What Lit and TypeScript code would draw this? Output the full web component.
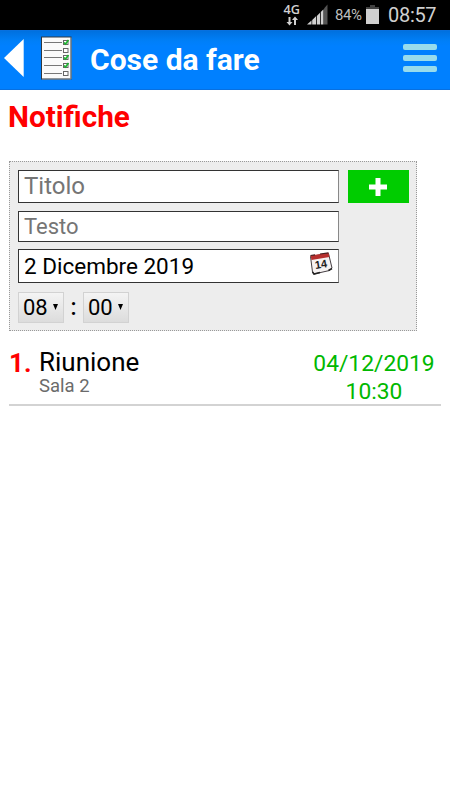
import { LitElement, html, css, svg } from "lit";
import { customElement, property } from "lit/decorators.js";

@customElement("status-bar")
class StatusBar extends LitElement {
  static styles = css`
    :host { display: flex; height: 30px; background: #000; color: #d0d0d0; font-family: Roboto, sans-serif; justify-content: flex-end; }
    .net { width: 20px; margin-right: 5px; height: 30px; }
    .signal { width: 21px; height: 30px; margin-right: 7px; }
    .pct { font-size: 15px; line-height: 31px; width: 27px; white-space: nowrap; color: #bdbdbd; letter-spacing: -0.4px; }
    .battery { width: 13px; height: 30px; margin: 0 9px 0 4px; }
    .time { font-size: 20px; line-height: 31px; width: 62px; white-space: nowrap; letter-spacing: -0.3px; }
    .g { font: 600 13px "Open Sans", sans-serif; fill: #d0d0d0; }
  `;
  render() {
    return html`
      <svg class="net" viewBox="0 0 20 30">
        <text class="g" x="1.500" y="13.500" textLength="16.500" lengthAdjust="spacingAndGlyphs">4G</text>
        <path d="M6.500 17h2v5h2l-3 3.500-3-3.500h2zM12 25v-5h-2l3-3.500 3 3.500h-2v5z" fill="#d0d0d0" />
      </svg>
      <svg class="signal" viewBox="0 0 21 30">
        <path d="M0 24.500 4.500 20.500v4zM5.200 24.500V20l3.800-3.800v8.300zM9.800 24.500V16l3.200-3.200v11.700zM13.800 24.500V12l2.700-2.700v15.200z" fill="#d0d0d0" />
        <path d="M17 24.500V8.500l3.500-4v20z" fill="#555" />
      </svg>
      <span class="pct">84%</span>
      <svg class="battery" viewBox="0 0 13 30">
        <path d="M4 5h5v2h4v3H0V7h4z" fill="#414141" /><path d="M0 9h13v15H0z" fill="#d0d0d0" />
      </svg>
      <span class="time">08:57</span>
    `;
  }
}

@customElement("title-bar")
class TitleBar extends LitElement {
  @property() heading = "";
  static styles = css`
    :host { display: flex; box-sizing: border-box; height: 60px; align-items: center; border-top: 1px solid #0870de; border-bottom: 1px solid #0870e0;
      background: linear-gradient(#0070df, #007ff8 10px, #0080ff 15px); color: #fff; font-family: Roboto, sans-serif; }
    .back { width: 20px; height: 58px; margin-left: 4px; }
    .list { width: 32px; height: 58px; margin-left: 17px; }
    .title { flex: 1; margin-left: 17px; font-size: 30px; font-weight: 700; line-height: 58px; white-space: nowrap; }
    .menu { display: flex; flex-direction: column; gap: 5px; margin-right: 13px; margin-top: -4px; }
    .bar { width: 34px; height: 6px; border-radius: 2px; background: #98dbec; }
  `;
  row(y: number, done: boolean) {
    return svg`
      <path d="M3 ${y}.500h18" stroke="#777" stroke-width="1"/>
      <rect x="22.500" y="${y - 1.5}" width="4.500" height="4" fill="#fff" stroke="#666"/>
      ${done ? svg`<path d="M23 ${y}.500l1.500 1.500 3-4" fill="none" stroke="#18b32c" stroke-width="1.600"/>` : ""}`;
  }
  render() {
    return html`
      <svg class="back" viewBox="0 0 20 58"><path d="M0 27 19.700 8v38z" fill="#fff" /></svg>
      <svg class="list" viewBox="0 0 32 58">
        <rect x="0.500" y="6" width="29.500" height="42" fill="#fafafa" stroke="#303840" />
        <path d="M30 6.500v41.500H1" fill="none" stroke="#8b9298" />
        ${this.row(11, true)}${this.row(19, false)}${this.row(26, true)}${this.row(34, true)}${this.row(42, false)}
      </svg>
      <span class="title">${this.heading}</span>
      <div class="menu"><div class="bar"></div><div class="bar"></div><div class="bar"></div></div>
    `;
  }
}

@customElement("notice-form")
class NoticeForm extends LitElement {
  static styles = css`
    :host { display: flex; box-sizing: border-box; width: 408px; height: 170px; margin: 0 0 0 9px; padding: 8px 7px 7px 8px;
      background: #ededed; border: 1px dotted #999; font-family: Roboto, sans-serif; }
    .fields { flex: none; width: 321px; }
    .field { box-sizing: border-box; display: flex; align-items: center; background: #fff; border: 1px solid #333; border-right: 1px solid #888; padding: 0 5px; color: #757575; white-space: nowrap; }
    .name { height: 33px; font-size: 24px; padding-bottom: 1px; }
    .text { height: 31px; margin-top: 8px; font-size: 22px; }
    .date { height: 34px; margin-top: 7px; font-size: 22.500px; color: #000; justify-content: space-between; padding-bottom: 1px; }
    .cal { width: 24px; height: 24px; margin-top: -6px; }
    .num { font: bold 11px "Liberation Sans", sans-serif; fill: #222; }
    .times { display: flex; align-items: center; margin-top: 9px; height: 31px; font-size: 22px; }
    .pick { box-sizing: border-box; display: flex; align-items: center; width: 46px; height: 31px; padding: 0 0 1px 4px; border: 1px solid #d2d2d2; background: linear-gradient(#f4f4f4, #dcdcdc); }
    .arrow { width: 5px; height: 6px; margin-left: 5px; }
    .colon { width: 19px; text-align: center; font-weight: 500; font-size: 23px; }
    .add { flex: none; display: flex; align-items: center; justify-content: center; width: 61px; height: 33px; margin-left: 9px; background: #0c0; }
    .plus { width: 18px; height: 18px; margin-right: 1px; }
  `;
  pick(value: string) {
    return html`<div class="pick">${value}<svg class="arrow" viewBox="0 0 5 6"><path d="M0 0h5L2.500 6z" /></svg></div>`;
  }
  render() {
    return html`
      <div class="fields">
        <div class="field name">Titolo</div>
        <div class="field text">Testo</div>
        <div class="field date">2 Dicembre 2019
          <svg class="cal" viewBox="0 0 24 24">
            <path d="M1.500 5.500 19.500 2.500 23 17 20.500 19.500 5 23 3.500 21z" fill="#f6f2f2" stroke="#443e42" />
            <path d="M1.500 4.500 19.500 1.800 20.500 6 2.500 9z" fill="#b62f2e" />
            <path d="M1.500 4.500 6 3.800M11 3 19.500 1.800" stroke="#481f20" stroke-width="1.200" />
            <path d="M3.500 21 5 23l6-1.500M19.500 19.500l3.500-2" fill="none" stroke="#222" stroke-width="1.600" />
            <text class="num" x="6" y="17" transform="rotate(-9 12 14)">14</text>
          </svg>
        </div>
        <div class="times">${this.pick("08")}<span class="colon">:</span>${this.pick("00")}</div>
      </div>
      <div class="add"><svg class="plus" viewBox="0 0 18 18"><path d="M6.500 0h5v6.500H18v5h-6.500V18h-5v-6.500H0v-5h6.500z" fill="#fff" /></svg></div>
    `;
  }
}

@customElement("notice-row")
class NoticeRow extends LitElement {
  @property() index = "";
  @property() name = "";
  @property() place = "";
  @property() day = "";
  @property() hour = "";
  static styles = css`
    :host { display: flex; box-sizing: border-box; width: 432px; height: 58px; margin: 17px 0 0 9px; border-bottom: 2px solid #d3d3d3; font-family: Roboto, sans-serif; }
    .index { width: 30px; color: #f00; font-size: 26px; font-weight: 700; line-height: 30px; }
    .main { flex: 1; }
    .name { font-size: 26px; line-height: 29px; color: #000; }
    .place { font-size: 18.500px; line-height: 18px; color: #6b6b6b; }
    .when { width: 122px; margin-right: 6px; text-align: center; font-size: 22.800px; line-height: 28px; color: #00b800; padding-top: 2px; white-space: nowrap; }
  `;
  render() {
    return html`
      <div class="index">${this.index}</div>
      <div class="main"><div class="name">${this.name}</div><div class="place">${this.place}</div></div>
      <div class="when"><div>${this.day}</div><div>${this.hour}</div></div>
    `;
  }
}

@customElement("app-root")
class AppRoot extends LitElement {
  static styles = css`
    :host { display: block; width: 450px; height: 800px; overflow: hidden; background: #fff; }
    .heading { height: 71px; padding-left: 8px; font: 700 29.700px/54px Roboto, sans-serif; color: #f00; }
  `;
  render() {
    return html`
      <status-bar></status-bar>
      <title-bar heading="Cose da fare"></title-bar>
      <div class="heading">Notifiche</div>
      <notice-form></notice-form>
      <notice-row index="1." name="Riunione" place="Sala 2" day="04/12/2019" hour="10:30"></notice-row>
    `;
  }
}
